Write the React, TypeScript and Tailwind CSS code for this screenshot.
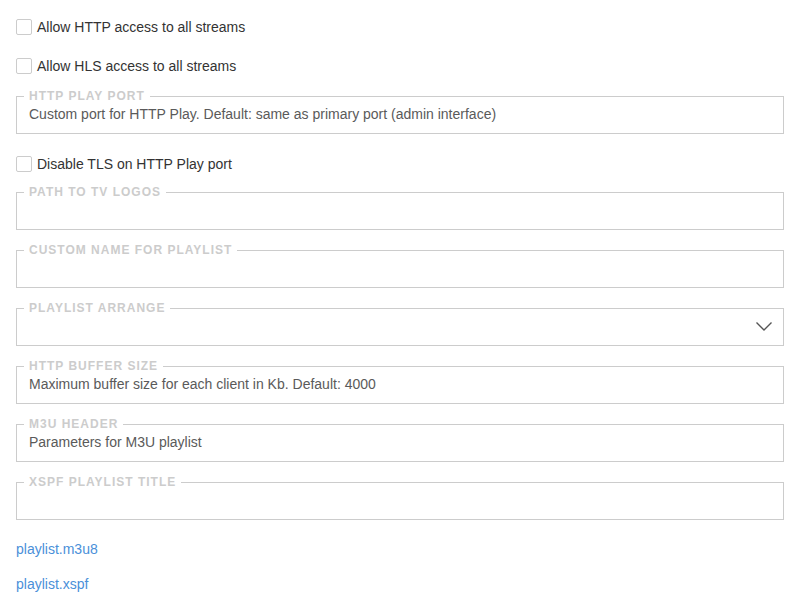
const font = { fontFamily: '"Liberation Sans", Arial, sans-serif' };

function Check({ label }: { label: string }) {
  return (
    <label className="flex h-[20px] items-center gap-[5px] text-[14px] text-[#333]">
      <span className="h-[16px] w-[16px] rounded-[2px] border border-[#ccc] bg-white" />
      {label}
    </label>
  );
}

function Field({
  legend,
  placeholder,
  select,
}: {
  legend: string;
  placeholder?: string;
  select?: boolean;
}) {
  return (
    <fieldset className="m-0 border border-[#ccc] pb-[7px] pl-[12px] pr-[12px] pt-0">
      <legend className="-ml-[5px] px-[5px] text-[12px] font-bold uppercase leading-[14px] tracking-[1px] text-[#ccc]">
        {legend}
      </legend>
      <div className="flex h-[23px] items-center justify-between text-[14px] text-[#5a5a5a]">
        <span>{placeholder ?? ""}</span>
        {select && (
          <svg width="16" height="9" viewBox="0 0 16 9" className="-mr-[1px]">
            <polyline points="0.5,0.5 8,8 15.5,0.5" fill="none" stroke="#555" strokeWidth="1.4" />
          </svg>
        )}
      </div>
    </fieldset>
  );
}

export default function App() {
  return (
    <div className="min-h-screen bg-white px-[16px] pt-[17px] pb-[10px]" style={font}>
      <div className="w-[768px]">
        <Check label="Allow HTTP access to all streams" />
        <div className="mt-[19px]">
          <Check label="Allow HLS access to all streams" />
        </div>
        <div className="mt-[13px]">
          <Field
            legend="HTTP Play Port"
            placeholder="Custom port for HTTP Play. Default: same as primary port (admin interface)"
          />
        </div>
        <div className="mt-[20px]">
          <Check label="Disable TLS on HTTP Play port" />
        </div>
        <div className="mt-[11px] flex flex-col gap-[13px]">
          <Field legend="Path to TV logos" />
          <Field legend="Custom name for playlist" />
          <Field legend="Playlist arrange" select />
          <Field
            legend="HTTP Buffer Size"
            placeholder="Maximum buffer size for each client in Kb. Default: 4000"
          />
          <Field legend="M3U Header" placeholder="Parameters for M3U playlist" />
          <Field legend="XSPF Playlist Title" />
        </div>
        <div className="mt-[21px] flex flex-col gap-[19px] text-[14px] leading-[16px] text-[#4a90d9]">
          <a href="#">playlist.m3u8</a>
          <a href="#">playlist.xspf</a>
        </div>
      </div>
    </div>
  );
}
